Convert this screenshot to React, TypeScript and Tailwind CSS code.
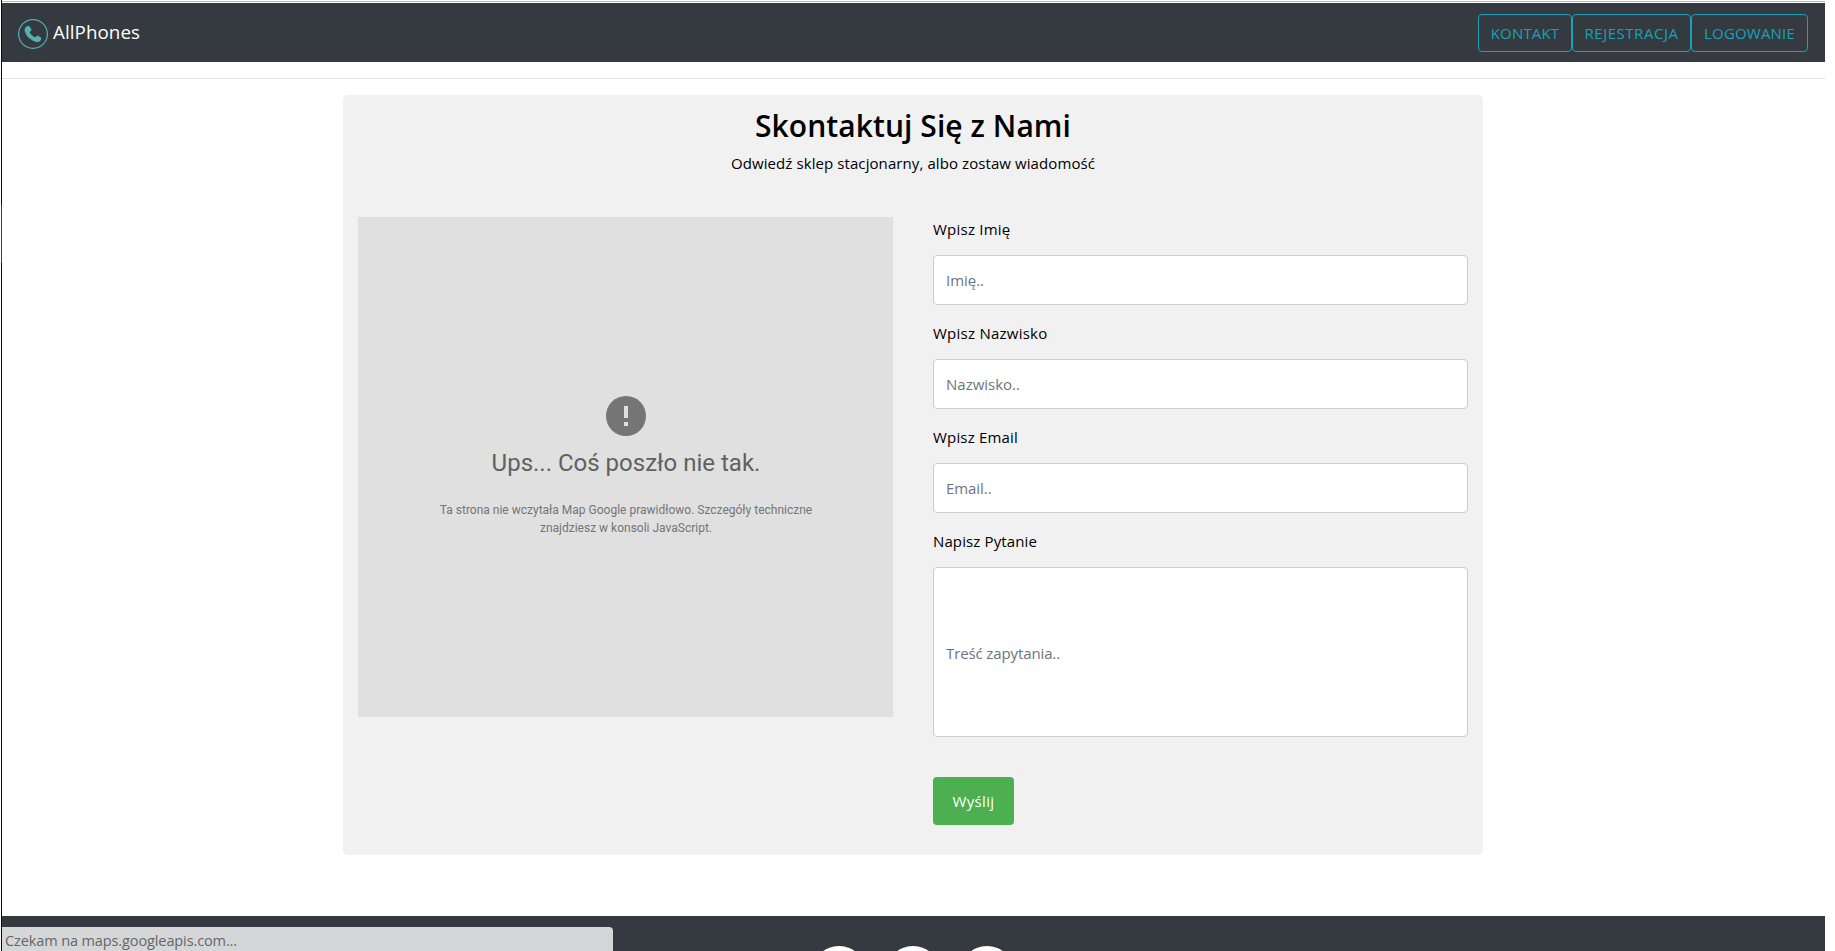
import React from 'react';

const navLinks = [
  { label: 'KONTAKT', width: 'w-[94px]', tracking: 'tracking-[0.166px]' },
  { label: 'REJESTRACJA', width: 'w-[119px]', tracking: 'tracking-[0.53px]' },
  { label: 'LOGOWANIE', width: 'w-[117px]', tracking: 'tracking-[0.197px]' },
];

const fields = [
  { label: 'Wpisz Imię', placeholder: 'Imię..', height: 'h-[50px]', labelTracking: 'tracking-[0.232px]', tracking: 'tracking-[-0.03px]' },
  { label: 'Wpisz Nazwisko', placeholder: 'Nazwisko..', height: 'h-[50px]', labelTracking: 'tracking-[0.249px]', tracking: 'tracking-normal' },
  { label: 'Wpisz Email', placeholder: 'Email..', height: 'h-[50px]', labelTracking: 'tracking-[0.18px]', tracking: 'tracking-[-0.07px]' },
  { label: 'Napisz Pytanie', placeholder: 'Treść zapytania..', height: 'h-[170px] pt-[2px]', labelTracking: 'tracking-[0.122px]', tracking: 'tracking-[-0.117px]' },
];

function PhoneLogo() {
  return (
    <svg className="size-[30px]" viewBox="0 0 30 30" fill="none">
      <circle cx="15" cy="15" r="14.4" stroke="#56b0b0" strokeWidth="1.2" />
      <path
        d="M7.8 7.9 L9.8 6.9 Q10.9 6.5 11.6 7.5 L13.3 10 Q13.8 11 13 11.8 L12 12.7 Q11.6 13.2 12 13.9 Q13.6 16.6 16.3 18.1 Q17.1 18.5 17.6 18 L18.7 16.9 Q19.3 16.3 20.2 16.7 L22.8 18.4 Q23.7 19.1 23.2 20.1 L22.2 21.9 Q21 23.3 18.6 22.9 Q10 21 6.9 13 Q6 9.4 7.8 7.9 Z"
        fill="#56b0b0"
      />
    </svg>
  );
}

function Navbar() {
  return (
    <nav className="flex h-[59px] items-center justify-between bg-[#343a40] pr-[17px] pl-4">
      <a className="flex items-center gap-[5px] text-white">
        <span className="mt-[3px]">
          <PhoneLogo />
        </span>
        <span className="pb-[2px] text-[18.75px] leading-[30px] tracking-[0.073px]">AllPhones</span>
      </a>
      <div className="flex pt-px">
        {navLinks.map((link) => (
          <a
            key={link.label}
            className={`flex h-[38px] items-center justify-center rounded border border-[#17a2b8] text-[15px] leading-6 text-[#17a2b8] ${link.width} ${link.tracking}`}
          >
            {link.label}
          </a>
        ))}
      </div>
    </nav>
  );
}

function MapError() {
  return (
    <div className="flex h-[500px] w-[535px] flex-col items-center bg-[#e0e0e0] pt-[179px] pl-px font-[Roboto,sans-serif]">
      <svg className="size-10" viewBox="0 0 40 40">
        <circle cx="20" cy="20" r="20" fill="#757575" />
        <path d="M18 10h4v12h-4zM18 26h4v4h-4z" fill="#e0e0e0" />
      </svg>
      <h3 className="mt-3 text-2xl leading-[30px] text-[#616161]">Ups... Coś poszło nie tak.</h3>
      <p className="mt-[23px] w-[400px] text-center text-xs leading-[18px] text-[#757575]">
        Ta strona nie wczytała Map Google prawidłowo. Szczegóły techniczne
        <br />
        znajdziesz w konsoli JavaScript.
      </p>
    </div>
  );
}

function ContactForm() {
  return (
    <form className="w-[535px] text-[15px] leading-6">
      {fields.map((field) => (
        <div key={field.label} className="mb-4">
          <label className={`mb-[14px] block h-6 ${field.labelTracking}`}>{field.label}</label>
          <input
            type="text"
            placeholder={field.placeholder}
            className={`block w-full rounded border border-[#cccccc] bg-white px-3 placeholder:text-[#6c757d] ${field.height} ${field.tracking}`}
          />
        </div>
      ))}
      <button
        type="button"
        className="mt-6 h-12 w-[81px] rounded bg-[#4caf50] text-[15px] tracking-[0.35px] text-white"
      >
        Wyślij
      </button>
    </form>
  );
}

export default function App() {
  return (
    <div className="flex h-[951px] w-[1835px] overflow-hidden bg-white font-['Open_Sans','Noto_Sans',sans-serif] text-black">
      <div className="ml-px flex w-px shrink-0 flex-col bg-[#000b12] pt-[205px]">
        <div className="h-[58px] bg-[#3c3c3c]" />
      </div>
      <div className="relative flex h-full w-[1823px] shrink-0 flex-col">
        <div className="mt-px h-px shrink-0 bg-[#b4b8b9]" />
        <div className="h-px shrink-0 bg-white" />
        <Navbar />
        <hr className="mt-4 border-t border-[#e3e3e3]" />
        <main className="mt-4 ml-[341px] h-[760px] w-[1140px] shrink-0 rounded-[5px] bg-[#f1f1f1] px-[15px] pt-[10px]">
          <header className="text-center">
            <h2 className="mb-2 h-[38px] pt-[2px] text-[30px] leading-[38px] font-semibold tracking-[0.069px]">
              Skontaktuj Się z Nami
            </h2>
            <p className="text-[15px] leading-6 tracking-[0.086px]">
              Odwiedź sklep stacjonarny, albo zostaw wiadomość
            </p>
          </header>
          <div className="mt-[42px] flex justify-between">
            <MapError />
            <ContactForm />
          </div>
        </main>
        <footer className="mt-[61px] flex h-[35px] shrink-0 justify-center gap-5 overflow-hidden bg-[#343a40] pt-[30px] pr-px">
          <span className="size-[54px] rounded-full bg-white" />
          <span className="size-[54px] rounded-full bg-white" />
          <span className="size-[54px] rounded-full bg-white" />
        </footer>
        <div className="absolute bottom-0 left-0 h-6 w-[611px] rounded-tr bg-[#d5d6d8] pl-[3px] text-[14.5px] leading-[27px] tracking-[-0.111px] text-[#666666]">
          Czekam na maps.googleapis.com...
        </div>
      </div>
    </div>
  );
}
